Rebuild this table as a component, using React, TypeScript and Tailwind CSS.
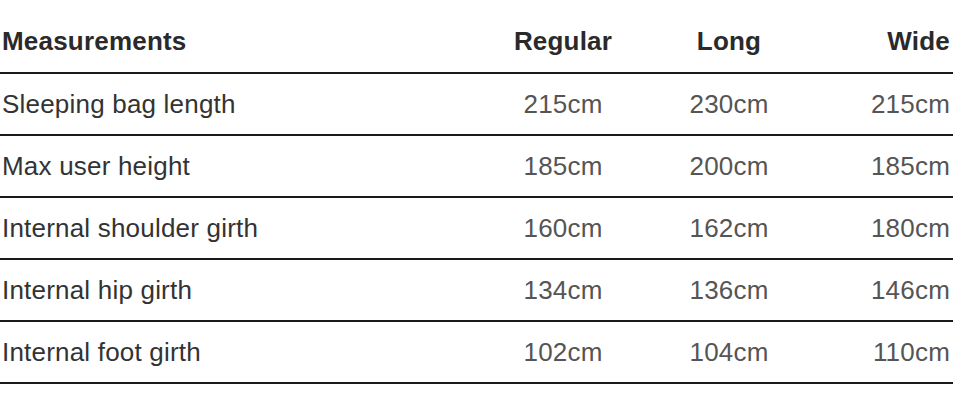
const rows = [
  { label: 'Sleeping bag length', regular: '215cm', long: '230cm', wide: '215cm' },
  { label: 'Max user height', regular: '185cm', long: '200cm', wide: '185cm' },
  { label: 'Internal shoulder girth', regular: '160cm', long: '162cm', wide: '180cm' },
  { label: 'Internal hip girth', regular: '134cm', long: '136cm', wide: '146cm' },
  { label: 'Internal foot girth', regular: '102cm', long: '104cm', wide: '110cm' },
];

export default function App() {
  return (
    <div className="min-h-screen bg-white pt-[12px] font-['Liberation_Sans',Arimo,Helvetica,sans-serif]">
      <div className="w-[953px] text-[26px] tracking-[0.2px]">
        {/* Header */}
        <div className="grid grid-cols-[480px_166px_166px_1fr] h-[62px] items-center border-b-2 border-[#1a1a1a] font-bold text-[#2a2a2a] pb-[2px]">
          <div className="pl-[2px]">Measurements</div>
          <div className="text-center">Regular</div>
          <div className="text-center">Long</div>
          <div className="text-right pr-[3px]">Wide</div>
        </div>

        {/* Rows */}
        {rows.map((r) => (
          <div
            key={r.label}
            className="grid grid-cols-[480px_166px_166px_1fr] h-[62px] items-center border-b-2 border-[#1a1a1a]"
          >
            <div className="pl-[2px] text-[#333]">{r.label}</div>
            <div className="text-center text-[#555]">{r.regular}</div>
            <div className="text-center text-[#555]">{r.long}</div>
            <div className="text-right pr-[3px] text-[#555]">{r.wide}</div>
          </div>
        ))}
      </div>
    </div>
  );
}
